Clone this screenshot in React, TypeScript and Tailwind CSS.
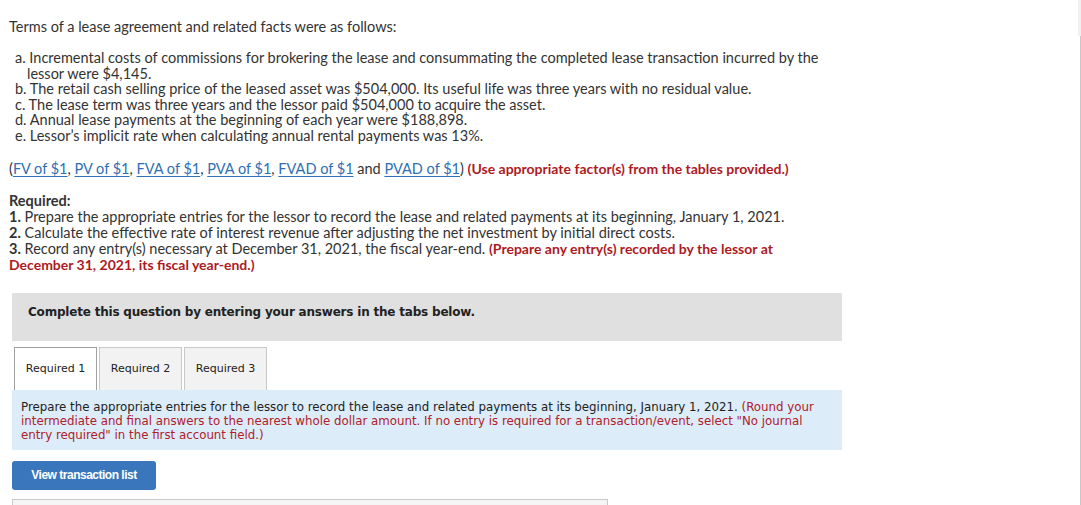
import React from "react";

const Link = ({ children }: { children: React.ReactNode }) => (
  <span className="text-[#2f6fb3] underline decoration-[#2f6fb3] underline-offset-2">{children}</span>
);

export default function App() {
  return (
    <div className="relative w-full h-[505px] overflow-hidden bg-white text-[#333] font-['Lato',sans-serif] text-[14.5px]">
      <div className="absolute right-0 top-0 h-full w-[3px] bg-white">
        <div className="h-[36px] w-full bg-[#f0f0f0]" />
        <div className="ml-[2px] h-full w-[1px] bg-[#c8c8c8]" />
      </div>

      <div className="pl-[9px] pt-[19px] whitespace-nowrap">
        <p className="leading-[16px]">Terms of a lease agreement and related facts were as follows:</p>
        <ul className="mt-[15px] leading-[15.6px]">
          <li className="pl-[18px] -indent-[12px]">
            a. Incremental costs of commissions for brokering the lease and consummating the completed lease transaction incurred by the
            <br />lessor were $4,145.
          </li>
          <li className="pl-[6px]">b. The retail cash selling price of the leased asset was $504,000. Its useful life was three years with no residual value.</li>
          <li className="pl-[6px]">c. The lease term was three years and the lessor paid $504,000 to acquire the asset.</li>
          <li className="pl-[6px]">d. Annual lease payments at the beginning of each year were $188,898.</li>
          <li className="pl-[6px]">e. Lessor’s implicit rate when calculating annual rental payments was 13%.</li>
        </ul>
        <p className="mt-[17px] leading-[16px]">
          (<Link>FV of $1</Link>, <Link>PV of $1</Link>, <Link>FVA of $1</Link>, <Link>PVA of $1</Link>, <Link>FVAD of $1</Link> and <Link>PVAD of $1</Link>){" "}
          <span className="font-bold text-[#ad1a1f] text-[14px]">(Use appropriate factor(s) from the tables provided.)</span>
        </p>
        <div className="mt-[16px] leading-[16px]">
          <p className="font-bold">Required:</p>
          <p><span className="font-bold">1.</span> Prepare the appropriate entries for the lessor to record the lease and related payments at its beginning, January 1, 2021.</p>
          <p><span className="font-bold">2.</span> Calculate the effective rate of interest revenue after adjusting the net investment by initial direct costs.</p>
          <p className="leading-[16.5px]">
            <span className="font-bold">3.</span> Record any entry(s) necessary at December 31, 2021, the fiscal year-end.{" "}
            <span className="font-bold text-[#ad1a1f] text-[14px]">(Prepare any entry(s) recorded by the lessor at</span>
            <br />
            <span className="font-bold text-[#ad1a1f] text-[14px]">December 31, 2021, its fiscal year-end.)</span>
          </p>
        </div>
      </div>

      <div className="ml-[12px] mt-[19px] w-[830px] font-['DejaVu_Sans',sans-serif]">
        <div className="h-[48px] bg-[#e0e0e0] pl-[16px] pt-[10px] leading-[18px] text-[12px] tracking-[-0.2px] font-bold text-[#222]">
          Complete this question by entering your answers in the tabs below.
        </div>
        <div className="mt-[6px] flex gap-[2px] pl-[2px] text-[11px] text-[#222]">
          <div className="flex h-[43px] w-[83px] items-center justify-center border border-b-0 border-[#a0a0a0] bg-white pt-[2px]">Required 1</div>
          <div className="flex h-[43px] w-[83px] items-center justify-center border border-b-0 border-[#c8c8c8] bg-[#f2f2f2] pt-[2px]">Required 2</div>
          <div className="flex h-[43px] w-[83px] items-center justify-center border border-b-0 border-[#c8c8c8] bg-[#f2f2f2] pt-[2px]">Required 3</div>
        </div>
        <div className="h-[60px] bg-[#dcecf9] px-[9px] pt-[10px] text-[11.8px] leading-[14px] text-[#222]">
          Prepare the appropriate entries for the lessor to record the lease and related payments at its beginning, January 1, 2021.{" "}
          <span className="text-[#b0202a]">(Round your intermediate and final answers to the nearest whole dollar amount. If no entry is required for a transaction/event, select "No journal entry required" in the first account field.)</span>
        </div>
        <button className="mt-[11px] flex h-[29px] w-[144px] items-center justify-center rounded-[3px] bg-[#3a76bb] font-['Liberation_Sans_Narrow','Liberation_Sans',sans-serif] text-[12px] font-bold tracking-[-0.5px] text-white">
          View transaction list
        </button>
        <div className="mt-[9px] h-[20px] w-[596px] border border-[#c8c8c8] bg-[#f5f5f5]" />
      </div>
    </div>
  );
}
